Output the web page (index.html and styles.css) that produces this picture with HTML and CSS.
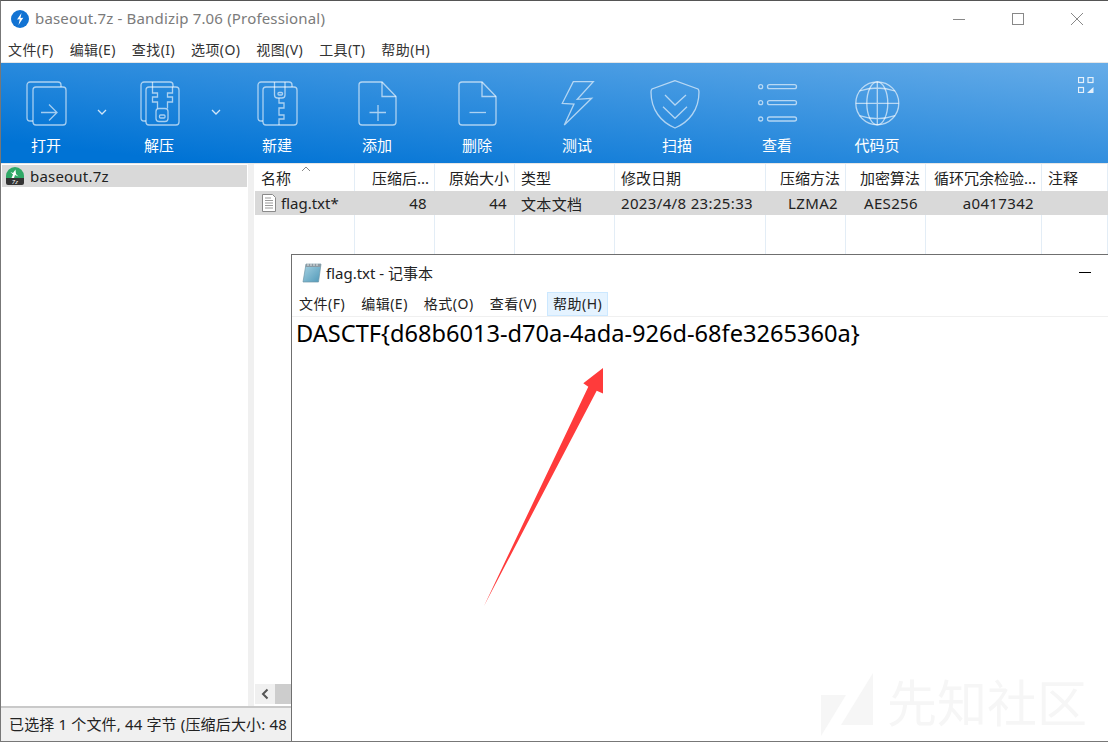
FILE: index.html
```html
<!DOCTYPE html>
<html>
<head>
    <title>baseout.7z - Bandizip</title>
    <link rel="stylesheet" href="styles.css">
</head>
<body>
<div class="app">
    <div class="titlebar">
        <svg class="app-logo" width="18" height="18" viewBox="0 0 18 18">
            <circle cx="9" cy="9" r="9" fill="#1273d3"/>
            <path d="M10.5 3 L6 9.5 L8.8 9.3 L7.5 15 L12.3 7.8 L9.5 8 Z" fill="#fff"/>
        </svg>
        <span class="app-title">baseout.7z - Bandizip 7.06 (Professional)</span>
        <div class="win-buttons">
            <svg width="12" height="12" viewBox="0 0 12 12"><path d="M0 6.5H12" stroke="#888" fill="none"/></svg>
            <svg width="12" height="12" viewBox="0 0 12 12"><rect x=".5" y=".5" width="11" height="11" stroke="#888" fill="none"/></svg>
            <svg width="12" height="12" viewBox="0 0 12 12"><path d="M0 0L12 12M12 0L0 12" stroke="#888" fill="none"/></svg>
        </div>
    </div>

    <div class="menubar">
        <span>文件(F)</span>
        <span>编辑(E)</span>
        <span>查找(I)</span>
        <span>选项(O)</span>
        <span>视图(V)</span>
        <span>工具(T)</span>
        <span>帮助(H)</span>
    </div>

    <div class="toolbar">
        <div class="tool tool-narrow">
            <svg class="tool-icon" width="48" height="48" viewBox="0 0 48 48">
                <path d="M11 41H8a3 3 0 0 1-3-3V5a3 3 0 0 1 3-3h28a3 3 0 0 1 3 3v2"/>
                <rect x="11" y="7" width="33" height="38" rx="3"/>
                <path d="M19 32.5H35M27 24.5L35 32.5L27 40.5"/>
            </svg>
            <span>打开</span>
        </div>
        <div class="tool-drop"><svg width="10" height="6" viewBox="0 0 10 6"><path d="M1 1L5 5L9 1"/></svg></div>
        <div class="tool tool-narrow">
            <svg class="tool-icon" width="48" height="48" viewBox="0 0 48 48">
                <path d="M11 41H9a3 3 0 0 1-3-3V5a3 3 0 0 1 3-3h26a3 3 0 0 1 3 3v2"/>
                <rect x="11" y="7" width="33" height="38" rx="3"/>
                <path d="M17.5 2V13H22.5V17H17.5V22H22.5V28.5M37.5 7V13H32.5V17H37.5V22H32.5V28.5"/>
                <rect x="21" y="28.5" width="12" height="13" rx="3"/>
                <rect x="24.5" y="35" width="5.5" height="3" rx="1"/>
            </svg>
            <span>解压</span>
        </div>
        <div class="tool-drop"><svg width="10" height="6" viewBox="0 0 10 6"><path d="M1 1L5 5L9 1"/></svg></div>
        <div class="tool">
            <svg class="tool-icon" width="48" height="48" viewBox="0 0 48 48">
                <path d="M10 41H8a3 3 0 0 1-3-3V5a3 3 0 0 1 3-3h28a3 3 0 0 1 3 3v2"/>
                <rect x="10" y="7" width="34" height="38" rx="3"/>
                <path d="M21.5 2V15a3 3 0 0 0 3 3H29a3 3 0 0 0 3-3V2"/>
                <rect x="25" y="12.5" width="4.5" height="2.5" rx="1"/>
                <path d="M26 18V23H31V28H26V35H31V39H26V45"/>
            </svg>
            <span>新建</span>
        </div>
        <div class="tool">
            <svg class="tool-icon" width="48" height="48" viewBox="0 0 48 48">
                <path d="M29 2H9a3 3 0 0 0-3 3V42a3 3 0 0 0 3 3H40a3 3 0 0 0 3-3V16.500Z"/>
                <path d="M29 2V16.500H43"/>
                <path d="M16.500 32.500H33M25 25V41"/>
            </svg>
            <span>添加</span>
        </div>
        <div class="tool">
            <svg class="tool-icon" width="48" height="48" viewBox="0 0 48 48">
                <path d="M29 2H9a3 3 0 0 0-3 3V42a3 3 0 0 0 3 3H40a3 3 0 0 0 3-3V16.500Z"/>
                <path d="M29 2V16.500H43"/>
                <path d="M16.500 32.500H33"/>
            </svg>
            <span>删除</span>
        </div>
        <div class="tool">
            <svg class="tool-icon" width="48" height="48" viewBox="0 0 48 48">
                <path d="M20.300 1.700H40.300L24.300 19.300L38.700 18.300L11.300 45L21 24L9.300 23.300Z"/>
            </svg>
            <span>测试</span>
        </div>
        <div class="tool">
            <svg class="tool-icon tool-icon-shield" width="48" height="48" viewBox="0 0 48 48">
                <path d="M22 .7L-1 9Q-2 10 -2 12C-2 30 8 42 22 48C36 42 46 30 46 12Q46 10 45 9Z"/>
                <path d="M12 15L22 25L33 15M10 26.700L22 38.300L34 26.700"/>
            </svg>
            <span>扫描</span>
        </div>
        <div class="tool">
            <svg class="tool-icon" width="48" height="48" viewBox="0 0 48 48">
                <circle cx="7.700" cy="6.700" r="2"/>
                <circle cx="7.700" cy="22.700" r="2"/>
                <circle cx="7.700" cy="39" r="2"/>
                <rect x="14.500" y="4.700" width="29" height="4" rx="2"/>
                <rect x="14.500" y="20.700" width="29" height="4" rx="2"/>
                <rect x="14.500" y="37" width="29" height="4" rx="2"/>
            </svg>
            <span>查看</span>
        </div>
        <div class="tool">
            <svg class="tool-icon" width="48" height="48" viewBox="0 0 48 48">
                <circle cx="24.300" cy="23.300" r="21.500"/>
                <ellipse cx="24.300" cy="23.300" rx="10.500" ry="21.500"/>
                <path d="M24.300 1.800V44.800M2.800 23.300H45.800M6.500 11Q24.300 5 42 11M6.500 35.600Q24.300 41.600 42 35.600"/>
            </svg>
            <span>代码页</span>
        </div>
        <svg class="layout-icon" width="16" height="16" viewBox="0 0 16 16">
            <rect x=".5" y=".5" width="5" height="5"/>
            <rect x="10" y=".5" width="5" height="5"/>
            <rect x=".5" y="10.500" width="5" height="5"/>
            <path class="layout-fill" d="M9 16L15.500 10V16Z"/>
        </svg>
    </div>

    <div class="main">
        <div class="tree">
            <div class="tree-row">
                <svg width="18" height="18" viewBox="0 0 18 18">
                    <path d="M0 11V9a9 9 0 0 1 18 0v2Z" fill="#2fa866"/>
                    <path d="M9.500 2.500L7 6 4.500 5 7 7.500 5.500 11H8L9 8l3.500 1.500L10 7Z" fill="#fff"/>
                    <path d="M0 11H18V16a2 2 0 0 1-2 2H2a2 2 0 0 1-2-2Z" fill="#333"/>
                    <text x="9" y="17" class="zip-label">7z</text>
                </svg>
                <span>baseout.7z</span>
            </div>
        </div>
        <div class="splitter"></div>
        <div class="list">
            <div class="list-grid list-head">
                <div class="cell">名称</div>
                <div class="cell right">压缩后...</div>
                <div class="cell right">原始大小</div>
                <div class="cell">类型</div>
                <div class="cell">修改日期</div>
                <div class="cell right">压缩方法</div>
                <div class="cell right">加密算法</div>
                <div class="cell right">循环冗余检验...</div>
                <div class="cell">注释</div>
                <svg class="sort-mark" width="10" height="6" viewBox="0 0 10 6"><path d="M1 5L5 1L9 5" fill="none" stroke="#888"/></svg>
            </div>
            <div class="list-grid list-row">
                <div class="cell name-cell">
                    <svg width="14" height="18" viewBox="0 0 14 18">
                        <path d="M.5 .5H10.500L13.500 3.500V17.500H.5Z" fill="#fff" stroke="#8a8a8a"/>
                        <path d="M3 4H9M3 6.500H11M3 9H11M3 11.500H11M3 14H11" stroke="#9a9a9a"/>
                    </svg>
                    <span>flag.txt*</span>
                </div>
                <div class="cell right">48</div>
                <div class="cell right">44</div>
                <div class="cell">文本文档</div>
                <div class="cell">2023/4/8 23:25:33</div>
                <div class="cell right">LZMA2</div>
                <div class="cell right">AES256</div>
                <div class="cell right">a0417342</div>
                <div class="cell"></div>
            </div>
            <div class="list-grid list-rest">
                <div class="cell"></div><div class="cell"></div><div class="cell"></div>
                <div class="cell"></div><div class="cell"></div><div class="cell"></div>
                <div class="cell"></div><div class="cell"></div><div class="cell"></div>
            </div>
            <div class="hscroll">
                <div class="hscroll-btn"><svg width="8" height="12" viewBox="0 0 8 12"><path d="M6.500 1.500L2 6L6.500 10.500" fill="none" stroke="#555" stroke-width="2"/></svg></div>
                <div class="hscroll-thumb"></div>
            </div>
        </div>
    </div>

    <div class="statusbar">已选择 1 个文件, 44 字节 (压缩后大小: 48 字节)</div>

    <!-- 记事本 window on top -->
    <div class="notepad">
        <div class="np-title">
            <svg width="20" height="21" viewBox="0 0 20 21">
                <defs>
                    <linearGradient id="npBlue" x1="0" y1="0" x2="1" y2="1">
                        <stop offset="0" stop-color="#a9d4e4"/>
                        <stop offset="1" stop-color="#4f98b8"/>
                    </linearGradient>
                </defs>
                <path d="M4 2H19L16.500 20H1Z" fill="url(#npBlue)" stroke="#6f97a8" stroke-width=".7"/>
                <path d="M4 2H19L18.500 5H3.500Z" fill="#8b9aa3"/>
                <path d="M6 1V4M9 1V4M12 1V4M15 1V4" stroke="#e6e6e6"/>
            </svg>
            <span class="np-name">flag.txt - 记事本</span>
            <div class="np-min"></div>
        </div>
        <div class="np-menu">
            <span>文件(F)</span>
            <span>编辑(E)</span>
            <span>格式(O)</span>
            <span>查看(V)</span>
            <span class="np-hover">帮助(H)</span>
        </div>
        <div class="np-text">DASCTF{d68b6013-d70a-4ada-926d-68fe3265360a}</div>
    </div>

    <svg class="red-arrow" width="125" height="245" viewBox="480 365 125 245">
        <path d="M484 606L588.300 386.700L583.300 383.300L603 368V393.500L596.700 390.700Z" fill="#ff3b3b"/>
    </svg>

    <div class="watermark">
        <svg width="54" height="64" viewBox="0 0 54 64">
            <path d="M1 22H26L1 63Z M53 0V52H21Z" fill="#f6f6f6"/>
        </svg>
        <span>先知社区</span>
    </div>
</div>
</body>
</html>
```

FILE: styles.css
```css
* {
    box-sizing: border-box;
}

body {
    margin: 0;
    background-color: #fff;
    font-family: "Noto Sans", "Noto Sans CJK SC", sans-serif;
    font-size: 15px;
    color: #222;
}

.app {
    position: relative;
    width: 1108px;
    height: 742px;
    overflow: hidden;
    display: flex;
    flex-direction: column;
    background-color: #fff;
    border-top: 1px solid #555;
    border-left: 1px solid #777;
    border-bottom: 1px solid #777;
}

/* title + menu */
.titlebar {
    height: 36px;
    flex: none;
    display: flex;
    align-items: center;
    padding-left: 10px;
    gap: 6px;
}

.app-title {
    margin-top: -3px;
    letter-spacing: 0.17px;
    color: #7b7b7b;
}

.win-buttons {
    margin-left: auto;
    display: flex;
    gap: 47px;
    padding-right: 25px;
}

.menubar {
    height: 25px;
    flex: none;
    display: flex;
    align-items: center;
    gap: 16px;
    padding: 0 0 2px 7px;
    font-size: 14px;
    letter-spacing: 0.4px;
    color: #333;
}

/* blue toolbar */
.toolbar {
    position: relative;
    height: 102px;
    flex: none;
    display: flex;
    border-top: 1px solid #e6e6e6;
    border-bottom: 1px solid #e6e6e6;
    background: linear-gradient(186deg, #66ace8 0%, #0073d5 90%);
}

.tool {
    width: 100px;
    flex: none;
    display: flex;
    flex-direction: column;
    align-items: center;
    padding-top: 17px;
    color: #fff;
}

.tool-narrow {
    width: 90px;
}

.tool-narrow + .tool-drop + .tool-narrow {
    width: 92px;
}

.tool span {
    margin-top: 6px;
    line-height: 22px;
}

.tool-icon {
    fill: none;
    stroke: rgba(255, 255, 255, 0.62);
    stroke-width: 1.3;
    overflow: visible;
}

.tool-drop {
    width: 22px;
    flex: none;
    padding-top: 36px;
    text-align: center;
}

.tool-drop svg {
    fill: none;
    stroke: rgba(255, 255, 255, 0.8);
    stroke-width: 1.3;
}

.layout-icon {
    position: absolute;
    top: 14px;
    right: 14px;
    fill: none;
    stroke: #e4f0fb;
    stroke-width: 1.2;
}

.layout-fill {
    fill: #e4f0fb;
    stroke: none;
}

/* tree + file list */
.main {
    flex: 1;
    display: flex;
    min-height: 0;
}

.tree {
    width: 247px;
    flex: none;
    padding: 1px 1px 0 1px;
}

.tree-row {
    height: 22px;
    display: flex;
    align-items: center;
    gap: 6px;
    padding-left: 4px;
    letter-spacing: 0.2px;
    background-color: #d9d9d9;
}

.zip-label {
    font-size: 6px;
    font-style: italic;
    fill: #fff;
    text-anchor: middle;
}

.splitter {
    width: 6px;
    flex: none;
    background-color: #f0f0f0;
}

.list {
    flex: 1;
    min-width: 0;
    display: flex;
    flex-direction: column;
    padding-left: 1px;
}

.list-grid {
    display: grid;
    grid-template-columns: 100px 80px 80px 100px 151px 80px 80px 116px 1fr;
}

.cell {
    padding: 0 5px 0 6px;
    border-right: 1px solid #e3edf6;
    white-space: nowrap;
    overflow: hidden;
    display: flex;
    align-items: center;
}

.cell.right {
    justify-content: flex-end;
}

.list-head {
    position: relative;
    height: 27px;
    flex: none;
}

.sort-mark {
    position: absolute;
    left: 46px;
    top: 2px;
}

.list-row {
    height: 24px;
    flex: none;
    letter-spacing: 0.35px;
    background-color: #d9d9d9;
}

.list-row .cell {
    padding-right: 7px;
    border-right-color: transparent;
}

.list-row .name-cell {
    gap: 5px;
    padding-left: 7px;
    letter-spacing: 0;
}

.list-rest {
    flex: 1;
}

.hscroll {
    height: 20px;
    flex: none;
    display: flex;
    margin-bottom: 2px;
    background-color: #f0f0f0;
}

.hscroll-btn {
    width: 20px;
    display: flex;
    align-items: center;
    justify-content: center;
}

.hscroll-thumb {
    width: 60px;
    background-color: #cdcdcd;
}

.statusbar {
    height: 35px;
    flex: none;
    display: flex;
    align-items: center;
    padding: 0 0 2px 8px;
    letter-spacing: 0.15px;
    white-space: nowrap;
    background-color: #f0f0f0;
    border-top: 2px solid #c9c9c9;
    color: #222;
}

/* notepad window */
.notepad {
    position: absolute;
    left: 290px;
    top: 253px;
    right: 0;
    bottom: -1px;
    display: flex;
    flex-direction: column;
    background-color: #fff;
    border-top: 1px solid #6f6f6f;
    border-left: 1px solid #6f6f6f;
}

.np-title {
    height: 34px;
    flex: none;
    display: flex;
    align-items: center;
    gap: 4px;
    padding-left: 10px;
}

.np-min {
    width: 12px;
    height: 1px;
    margin-left: auto;
    margin-right: 17px;
    background-color: #000;
}

.np-menu {
    height: 28px;
    flex: none;
    display: flex;
    align-items: flex-end;
    gap: 16px;
    padding-left: 7px;
    font-size: 14px;
    letter-spacing: 0.5px;
    line-height: 24px;
    border-bottom: 1px solid #f0f0f0;
}

.np-hover {
    height: 24px;
    margin-left: -6px;
    padding: 0 5px;
    display: flex;
    align-items: center;
    background-color: #e5f3ff;
    border: 1px solid #cce8ff;
}

.np-text {
    padding: 0 0 0 4px;
    font-size: 23.6px;
    line-height: 32px;
    color: #000;
    white-space: nowrap;
}

.red-arrow {
    position: absolute;
    left: 479px;
    top: 364px;
}

.watermark {
    position: absolute;
    left: 819px;
    top: 672px;
    display: flex;
    align-items: flex-start;
    gap: 13px;
    font-size: 50px;
    line-height: 60px;
    color: #f6f6f6;
    white-space: nowrap;
}
```
